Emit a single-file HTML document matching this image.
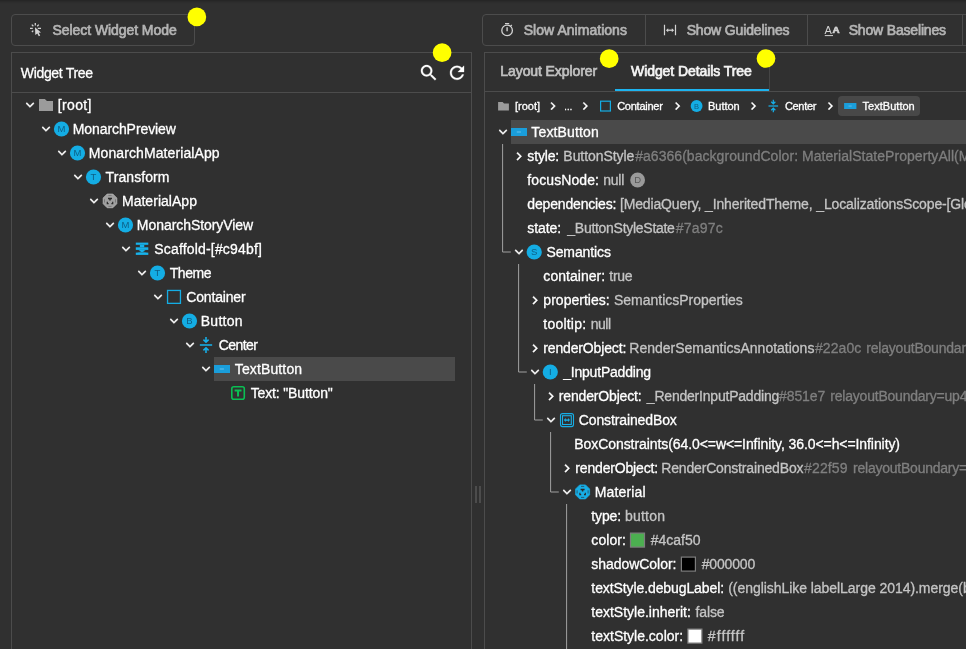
<!DOCTYPE html><html><head><meta charset="utf-8"><title>Flutter Inspector</title><style>
html,body{margin:0;padding:0;}
body{width:966px;height:649px;overflow:hidden;background:#303030;position:relative;font-family:"Liberation Sans",sans-serif;}
.t{position:absolute;white-space:pre;line-height:1;-webkit-text-stroke:0.3px currentColor;}
.bx{position:absolute;box-sizing:border-box;}
svg{position:absolute;left:0;top:0;will-change:transform;}
.tail{letter-spacing:-0.3px;}
.med{-webkit-text-stroke:0.7px currentColor;}

</style></head><body>
<div class="bx" style="left:0;top:0;width:966px;height:4px;background:linear-gradient(#242424,#2c2c2c 50%,#303030);"></div>
<div class="bx" style="left:11px;top:14px;width:184px;height:32px;border:1px solid #4c4c4c;border-radius:4px;"></div>
<div class="bx" style="left:482px;top:14px;width:700px;height:32px;border:1px solid #4c4c4c;border-radius:4px;"></div>
<div class="bx" style="left:645px;top:14px;width:1px;height:32px;background:#4c4c4c;"></div>
<div class="bx" style="left:807px;top:14px;width:1px;height:32px;background:#4c4c4c;"></div>
<div class="bx" style="left:962px;top:14px;width:1px;height:32px;background:#4c4c4c;"></div>
<div class="bx" style="left:11px;top:52px;width:461px;height:700px;border:1px solid #4c4c4c;"></div>
<div class="bx" style="left:11px;top:92px;width:461px;height:1px;background:#4c4c4c;"></div>
<div class="bx" style="left:214px;top:357px;width:241px;height:24px;background:#4a4a4a;"></div>
<div class="bx" style="left:475px;top:486px;width:2px;height:17px;background:#4c4c4c;"></div>
<div class="bx" style="left:479px;top:486px;width:2px;height:17px;background:#4c4c4c;"></div>
<div class="bx" style="left:484px;top:52px;width:700px;height:700px;border:1px solid #4c4c4c;"></div>
<div class="bx" style="left:484px;top:91px;width:482px;height:1px;background:#4c4c4c;"></div>
<div class="bx" style="left:769px;top:53px;width:1px;height:38px;background:#454545;"></div>
<div class="bx" style="left:615px;top:89px;width:154px;height:2px;background:#1db4f0;"></div>
<div class="bx" style="left:838px;top:96px;width:82px;height:20px;background:#484848;border-radius:4px;"></div>
<div class="bx" style="left:511px;top:120px;width:455px;height:24px;background:#4a4a4a;"></div>
<svg width="966" height="649" viewBox="0 0 966 649">
<path transform="translate(21.84,96.74) scale(0.68)" fill="#ffffff" stroke="#ffffff" stroke-width="0.55" stroke-linejoin="miter" d="M16.59 8.59L12 13.17 7.41 8.59 6 10l6 6 6-6z"/>
<path fill="#9b9b9b" d="M39 99 h5.88 l2.04 2.04 h6.08 v9.96 h-14 z"/>
<path transform="translate(37.84,120.74) scale(0.68)" fill="#ffffff" stroke="#ffffff" stroke-width="0.55" stroke-linejoin="miter" d="M16.59 8.59L12 13.17 7.41 8.59 6 10l6 6 6-6z"/>
<circle cx="61.5" cy="129" r="7.6" fill="#14ade4"/>
<text x="61.5" y="132.42" font-size="9.5" text-anchor="middle" fill="#0d5f86" font-family="Liberation Sans, sans-serif">M</text>
<path transform="translate(53.84,144.74) scale(0.68)" fill="#ffffff" stroke="#ffffff" stroke-width="0.55" stroke-linejoin="miter" d="M16.59 8.59L12 13.17 7.41 8.59 6 10l6 6 6-6z"/>
<circle cx="77.5" cy="153" r="7.6" fill="#14ade4"/>
<text x="77.5" y="156.42" font-size="9.5" text-anchor="middle" fill="#0d5f86" font-family="Liberation Sans, sans-serif">M</text>
<path transform="translate(69.84,168.74) scale(0.68)" fill="#ffffff" stroke="#ffffff" stroke-width="0.55" stroke-linejoin="miter" d="M16.59 8.59L12 13.17 7.41 8.59 6 10l6 6 6-6z"/>
<circle cx="93.5" cy="177" r="7.6" fill="#14ade4"/>
<text x="93.5" y="180.42" font-size="9.5" text-anchor="middle" fill="#0d5f86" font-family="Liberation Sans, sans-serif">T</text>
<path transform="translate(85.84,192.74) scale(0.68)" fill="#ffffff" stroke="#ffffff" stroke-width="0.55" stroke-linejoin="miter" d="M16.59 8.59L12 13.17 7.41 8.59 6 10l6 6 6-6z"/>
<polygon points="116.84,203.73 112.83,207.74 107.17,207.74 103.16,203.73 103.16,198.07 107.17,194.06 112.83,194.06 116.84,198.07" fill="#a0a0a0" stroke="#bdbdbd" stroke-width="0.7" stroke-linejoin="round"/>
<path d="M108.4 195.4 H111.6 M108.4 206.4 H111.6 M104.5 199.3 V202.5 M115.5 199.3 V202.5" stroke="#6e6e6e" stroke-width="0.8"/>
<path d="M108 198.5 H112 M110 198.5 V200.5" stroke="#2a2a2a" stroke-width="1.5" fill="none"/>
<path d="M107.3 201.70000000000002 V203.70000000000002 H108.6 M112.7 201.70000000000002 V203.70000000000002 H111.4" stroke="#2a2a2a" stroke-width="1.2" fill="none"/>
<path transform="translate(101.84,216.74) scale(0.68)" fill="#ffffff" stroke="#ffffff" stroke-width="0.55" stroke-linejoin="miter" d="M16.59 8.59L12 13.17 7.41 8.59 6 10l6 6 6-6z"/>
<circle cx="125.5" cy="225" r="7.6" fill="#14ade4"/>
<text x="125.5" y="228.42" font-size="9.5" text-anchor="middle" fill="#0d5f86" font-family="Liberation Sans, sans-serif">M</text>
<path transform="translate(117.84,240.74) scale(0.68)" fill="#ffffff" stroke="#ffffff" stroke-width="0.55" stroke-linejoin="miter" d="M16.59 8.59L12 13.17 7.41 8.59 6 10l6 6 6-6z"/>
<g fill="#17b2ea"><rect x="135.8" y="242.6" width="12.5" height="2.2"/><rect x="135.8" y="247.29999999999998" width="12.5" height="2.6"/><rect x="135.8" y="252.6" width="12.5" height="2.3"/><rect x="139.85000000000002" y="244.79999999999998" width="4.4" height="2.5"/><path d="M138.45000000000002 249.9 h7.2 l-2.6 1.7 l4 1 h-10 l4 -1z"/></g>
<path transform="translate(133.84,264.74) scale(0.68)" fill="#ffffff" stroke="#ffffff" stroke-width="0.55" stroke-linejoin="miter" d="M16.59 8.59L12 13.17 7.41 8.59 6 10l6 6 6-6z"/>
<circle cx="157.5" cy="273" r="7.6" fill="#14ade4"/>
<text x="157.5" y="276.42" font-size="9.5" text-anchor="middle" fill="#0d5f86" font-family="Liberation Sans, sans-serif">T</text>
<path transform="translate(149.84,288.74) scale(0.68)" fill="#ffffff" stroke="#ffffff" stroke-width="0.55" stroke-linejoin="miter" d="M16.59 8.59L12 13.17 7.41 8.59 6 10l6 6 6-6z"/>
<rect x="167.55" y="290.45" width="12.90" height="12.90" fill="none" stroke="#14ade4" stroke-width="1.3"/>
<path transform="translate(165.84,312.74) scale(0.68)" fill="#ffffff" stroke="#ffffff" stroke-width="0.55" stroke-linejoin="miter" d="M16.59 8.59L12 13.17 7.41 8.59 6 10l6 6 6-6z"/>
<circle cx="189.5" cy="321" r="7.6" fill="#14ade4"/>
<text x="189.5" y="324.42" font-size="9.5" text-anchor="middle" fill="#0d5f86" font-family="Liberation Sans, sans-serif">B</text>
<path transform="translate(181.84,336.74) scale(0.68)" fill="#ffffff" stroke="#ffffff" stroke-width="0.55" stroke-linejoin="miter" d="M16.59 8.59L12 13.17 7.41 8.59 6 10l6 6 6-6z"/>
<g stroke="#17b0ea" stroke-width="1.55" fill="none"><path d="M199.85 345 H212.15"/><path d="M206 337.00 V342.40 M203.40 339.60 L206 342.20 L208.60 339.60"/><path d="M206 353.00 V347.60 M203.40 350.40 L206 347.80 L208.60 350.40"/></g>
<path transform="translate(197.84,360.74) scale(0.68)" fill="#ffffff" stroke="#ffffff" stroke-width="0.55" stroke-linejoin="miter" d="M16.59 8.59L12 13.17 7.41 8.59 6 10l6 6 6-6z"/>
<rect x="214" y="365" width="16" height="8" fill="#1a9edb"/>
<rect x="219.76" y="368.52" width="4.16" height="0.96" fill="#6cc3ee"/>
<rect x="231.80" y="386.70" width="12.50" height="12.50" rx="2" fill="none" stroke="#0abf53" stroke-width="1.6"/>
<path fill="#0abf53" d="M234.60 389.50 h6.90 v2 h-2.45 v4.90 h-2 v-4.90 h-2.45 z"/>
<path fill="#9b9b9b" d="M498.1 102 h4.54 l1.43 1.43 h4.84 v6.97 h-10.8 z"/>
<path transform="translate(545.10,98.30) scale(0.65)" fill="#ffffff" stroke="#ffffff" stroke-width="0.55" d="M10 6L8.59 7.41 13.17 12l-4.58 4.59L10 18l6-6z"/>
<path transform="translate(577.40,98.30) scale(0.65)" fill="#ffffff" stroke="#ffffff" stroke-width="0.55" d="M10 6L8.59 7.41 13.17 12l-4.58 4.59L10 18l6-6z"/>
<rect x="600.60" y="101.20" width="9.80" height="9.80" fill="none" stroke="#14ade4" stroke-width="1.2"/>
<path transform="translate(669.70,98.30) scale(0.65)" fill="#ffffff" stroke="#ffffff" stroke-width="0.55" d="M10 6L8.59 7.41 13.17 12l-4.58 4.59L10 18l6-6z"/>
<circle cx="696.6" cy="106" r="5.9" fill="#14ade4"/>
<text x="696.6" y="108.70" font-size="7.5" text-anchor="middle" fill="#0d5f86" font-family="Liberation Sans, sans-serif">B</text>
<path transform="translate(745.60,98.30) scale(0.65)" fill="#ffffff" stroke="#ffffff" stroke-width="0.55" d="M10 6L8.59 7.41 13.17 12l-4.58 4.59L10 18l6-6z"/>
<g stroke="#17b0ea" stroke-width="1.21" fill="none"><path d="M768.50 106 H778.10"/><path d="M773.3 99.76 V103.97 M771.27 101.79 L773.3 103.82 L775.33 101.79"/><path d="M773.3 112.24 V108.03 M771.27 110.21 L773.3 108.18 L775.33 110.21"/></g>
<path transform="translate(822.50,98.30) scale(0.65)" fill="#ffffff" stroke="#ffffff" stroke-width="0.55" d="M10 6L8.59 7.41 13.17 12l-4.58 4.59L10 18l6-6z"/>
<rect x="844.1" y="103" width="12.3" height="6" fill="#1a9edb"/>
<rect x="848.53" y="105.64" width="3.20" height="0.80" fill="#6cc3ee"/>
<path transform="translate(494.84,123.74) scale(0.68)" fill="#ffffff" stroke="#ffffff" stroke-width="0.55" stroke-linejoin="miter" d="M16.59 8.59L12 13.17 7.41 8.59 6 10l6 6 6-6z"/>
<rect x="511" y="128" width="16" height="8" fill="#1a9edb"/>
<rect x="516.76" y="131.52" width="4.16" height="0.96" fill="#6cc3ee"/>
<path transform="translate(510.84,148.14) scale(0.68)" fill="#ffffff" stroke="#ffffff" stroke-width="0.55" d="M10 6L8.59 7.41 13.17 12l-4.58 4.59L10 18l6-6z"/>
<circle cx="637.6" cy="180" r="7.4" fill="#9a9a9a"/>
<text x="637.6" y="183.42" font-size="9.5" text-anchor="middle" fill="#585858" font-family="Liberation Sans, sans-serif">D</text>
<path transform="translate(510.84,243.74) scale(0.68)" fill="#ffffff" stroke="#ffffff" stroke-width="0.55" stroke-linejoin="miter" d="M16.59 8.59L12 13.17 7.41 8.59 6 10l6 6 6-6z"/>
<circle cx="534.2" cy="252" r="7.6" fill="#14ade4"/>
<text x="534.2" y="255.42" font-size="9.5" text-anchor="middle" fill="#0d5f86" font-family="Liberation Sans, sans-serif">S</text>
<path transform="translate(526.84,292.14) scale(0.68)" fill="#ffffff" stroke="#ffffff" stroke-width="0.55" d="M10 6L8.59 7.41 13.17 12l-4.58 4.59L10 18l6-6z"/>
<path transform="translate(526.84,340.14) scale(0.68)" fill="#ffffff" stroke="#ffffff" stroke-width="0.55" d="M10 6L8.59 7.41 13.17 12l-4.58 4.59L10 18l6-6z"/>
<path transform="translate(526.84,363.74) scale(0.68)" fill="#ffffff" stroke="#ffffff" stroke-width="0.55" stroke-linejoin="miter" d="M16.59 8.59L12 13.17 7.41 8.59 6 10l6 6 6-6z"/>
<circle cx="550.3" cy="372" r="7.6" fill="#14ade4"/>
<text x="550.3" y="375.42" font-size="9.5" text-anchor="middle" fill="#0d5f86" font-family="Liberation Sans, sans-serif">I</text>
<path transform="translate(542.84,388.14) scale(0.68)" fill="#ffffff" stroke="#ffffff" stroke-width="0.55" d="M10 6L8.59 7.41 13.17 12l-4.58 4.59L10 18l6-6z"/>
<path transform="translate(542.84,411.74) scale(0.68)" fill="#ffffff" stroke="#ffffff" stroke-width="0.55" stroke-linejoin="miter" d="M16.59 8.59L12 13.17 7.41 8.59 6 10l6 6 6-6z"/>
<rect x="560.5" y="413.6" width="13.0" height="13.0" rx="2" fill="none" stroke="#17aee6" stroke-width="1.1"/>
<rect x="562.5" y="415.7" width="8.8" height="8.8" fill="none" stroke="#17aee6" stroke-width="1.1"/>
<path d="M565.1 420.1 H568.6999999999999" stroke="#17aee6" stroke-width="1.4"/>
<path fill="#17aee6" d="M563.8 420.1 l2 -2 v4z M570.0 420.1 l-2 -2 v4z"/>
<path transform="translate(558.84,460.14) scale(0.68)" fill="#ffffff" stroke="#ffffff" stroke-width="0.55" d="M10 6L8.59 7.41 13.17 12l-4.58 4.59L10 18l6-6z"/>
<path transform="translate(558.84,483.74) scale(0.68)" fill="#ffffff" stroke="#ffffff" stroke-width="0.55" stroke-linejoin="miter" d="M16.59 8.59L12 13.17 7.41 8.59 6 10l6 6 6-6z"/>
<polygon points="589.62,494.81 585.51,498.92 579.69,498.92 575.58,494.81 575.58,488.99 579.69,484.88 585.51,484.88 589.62,488.99" fill="#17aee6" stroke="#17aee6" stroke-width="0.7" stroke-linejoin="round"/>
<path d="M581.0 486.4 H584.2 M581.0 497.4 H584.2 M577.1 490.29999999999995 V493.5 M588.1 490.29999999999995 V493.5" stroke="#274a5a" stroke-width="0.8"/>
<path d="M580.6 489.5 H584.6 M582.6 489.5 V491.5" stroke="#2a2a2a" stroke-width="1.5" fill="none"/>
<path d="M579.9 492.7 V494.7 H581.2 M585.3000000000001 492.7 V494.7 H584.0" stroke="#2a2a2a" stroke-width="1.2" fill="none"/>
<rect x="630.50" y="533.10" width="14.00" height="14.00" fill="#4caf50" stroke="#7d7d7d" stroke-width="1.2"/>
<rect x="681.40" y="557.10" width="14.00" height="14.00" fill="#000000" stroke="#7d7d7d" stroke-width="1.2"/>
<rect x="687.90" y="629.10" width="14.00" height="14.00" fill="#ffffff" stroke="#7d7d7d" stroke-width="1.2"/>
<path d="M502.6 144 V252 H510.8" fill="none" stroke="#a0a0a0" stroke-width="1"/>
<path d="M518.6 264 V372 H526.8" fill="none" stroke="#a0a0a0" stroke-width="1"/>
<path d="M534.6 384 V420 H542.8" fill="none" stroke="#a0a0a0" stroke-width="1"/>
<path d="M550.6 432 V492 H558.8" fill="none" stroke="#a0a0a0" stroke-width="1"/>
<path d="M566.6 504 V660" fill="none" stroke="#a0a0a0" stroke-width="1"/>
<g stroke="#d2d2d2" stroke-width="1.3" fill="none"><path d="M35.3 23 V25.6 M30 28.3 H32.8 M37.8 28.3 H41 M31.8 24.6 L33.4 26.2 M38.8 24.6 L37.2 26.2 M31.9 32 L33.3 30.6"/></g>
<path fill="#d2d2d2" d="M35 27.3 L41 32.4 L38.6 32.8 L40.2 35.6 L38.8 36.3 L37.3 33.5 L35.3 35z"/>
<circle cx="507.1" cy="30.4" r="5.3" fill="none" stroke="#d2d2d2" stroke-width="1.3"/>
<path d="M505 23.6 H509.2" stroke="#d2d2d2" stroke-width="1.2"/>
<path d="M507.1 27.2 V31.2" stroke="#d2d2d2" stroke-width="1.4"/>
<path d="M510.6 26.2 L511.8 25" stroke="#d2d2d2" stroke-width="1.2"/>
<path d="M664.5 24.8 V35.2 M675.5 24.8 V35.2" stroke="#d2d2d2" stroke-width="1.2"/>
<path d="M667.5 30.2 H672.5" stroke="#d2d2d2" stroke-width="1.3"/>
<path fill="#d2d2d2" d="M665.9 30.2 l2.3 -2 v4z M674.1 30.2 l-2.3 -2 v4z"/>
<text x="824.4" y="33.8" font-size="11" fill="#d2d2d2" font-family="Liberation Sans, sans-serif">A</text>
<text x="832.6" y="33.1" font-size="9.8" font-weight="700" stroke="#d2d2d2" stroke-width="0.7" fill="#d2d2d2" font-family="Liberation Sans, sans-serif">A</text>
<path d="M824.8 35.6 H833" stroke="#d2d2d2" stroke-width="1"/>
<path transform="translate(418.3,62.4) scale(0.875)" fill="#ffffff" stroke="#ffffff" stroke-width="0.35" d="M15.5 14h-.79l-.28-.27C15.41 12.59 16 11.11 16 9.5 16 5.91 13.09 3 9.5 3S3 5.91 3 9.5 5.91 16 9.5 16c1.61 0 3.09-.59 4.23-1.57l.27.28v.79l5 4.99L20.49 19l-4.99-5zm-6 0C7.01 14 5 11.99 5 9.5S7.01 5 9.5 5 14 7.01 14 9.5 11.99 14 9.5 14z"/>
<path transform="translate(446.5,62.3) scale(0.875)" fill="#ffffff" stroke="#ffffff" stroke-width="0.35" d="M17.65 6.35C16.2 4.9 14.21 4 12 4c-4.42 0-7.99 3.58-7.99 8s3.57 8 7.99 8c3.73 0 6.84-2.55 7.73-6h-2.08c-.82 2.33-3.04 4-5.65 4-3.31 0-6-2.69-6-6s2.69-6 6-6c1.66 0 3.14.69 4.22 1.78L13 11h7V4l-2.35 2.35z"/>
<circle cx="196.85" cy="16.95" r="9.35" fill="#ffff00"/>
<circle cx="442.1" cy="52.7" r="9.35" fill="#ffff00"/>
<circle cx="609.2" cy="58.7" r="9.35" fill="#ffff00"/>
<circle cx="766" cy="58.5" r="9.35" fill="#ffff00"/>
</svg>
<div id="txt" style="position:absolute;left:0;top:0;width:966px;height:649px;will-change:transform;">
<div class="t" id="t0" style="left:57.75px;top:98.15px;font-size:14px;font-weight:400;color:#ffffff;letter-spacing:0.347px;"><span id="s0">[root]</span></div>
<div class="t" id="t1" style="left:72.75px;top:122.15px;font-size:14px;font-weight:400;color:#ffffff;letter-spacing:-0.085px;"><span id="s1">MonarchPreview</span></div>
<div class="t" id="t2" style="left:88.85px;top:146.15px;font-size:14px;font-weight:400;color:#ffffff;letter-spacing:0.092px;"><span id="s2">MonarchMaterialApp</span></div>
<div class="t" id="t3" style="left:105.55px;top:170.15px;font-size:14px;font-weight:400;color:#ffffff;letter-spacing:0.081px;"><span id="s3">Transform</span></div>
<div class="t" id="t4" style="left:121.95px;top:194.15px;font-size:14px;font-weight:400;color:#ffffff;letter-spacing:0.033px;"><span id="s4">MaterialApp</span></div>
<div class="t" id="t5" style="left:136.85px;top:218.15px;font-size:14px;font-weight:400;color:#ffffff;letter-spacing:-0.058px;"><span id="s5">MonarchStoryView</span></div>
<div class="t" id="t6" style="left:154.25px;top:242.15px;font-size:14px;font-weight:400;color:#ffffff;letter-spacing:0.177px;"><span id="s6">Scaffold-[#c94bf]</span></div>
<div class="t" id="t7" style="left:169.65px;top:266.15px;font-size:14px;font-weight:400;color:#ffffff;letter-spacing:-0.409px;"><span id="s7">Theme</span></div>
<div class="t" id="t8" style="left:186.35px;top:290.15px;font-size:14px;font-weight:400;color:#ffffff;letter-spacing:-0.186px;"><span id="s8">Container</span></div>
<div class="t" id="t9" style="left:200.75px;top:314.15px;font-size:14px;font-weight:400;color:#ffffff;letter-spacing:0.252px;"><span id="s9">Button</span></div>
<div class="t" id="t10" style="left:218.65px;top:338.15px;font-size:14px;font-weight:400;color:#ffffff;letter-spacing:-0.542px;"><span id="s10">Center</span></div>
<div class="t" id="t11" style="left:234.75px;top:362.15px;font-size:14px;font-weight:400;color:#ffffff;letter-spacing:0.132px;"><span id="s11">TextButton</span></div>
<div class="t" id="t12" style="left:250.65px;top:386.15px;font-size:14px;font-weight:400;color:#ffffff;letter-spacing:-0.135px;"><span id="s12">Text: "Button"</span></div>
<div class="t med" id="t13" style="left:52.55px;top:23.15px;font-size:14px;font-weight:400;color:#b4b4b4;letter-spacing:-0.067px;"><span id="s13">Select Widget Mode</span></div>
<div class="t med" id="t14" style="left:523.75px;top:23.15px;font-size:14px;font-weight:400;color:#b4b4b4;letter-spacing:0.033px;"><span id="s14">Slow Animations</span></div>
<div class="t med" id="t15" style="left:686.65px;top:23.15px;font-size:14px;font-weight:400;color:#b4b4b4;letter-spacing:-0.151px;"><span id="s15">Show Guidelines</span></div>
<div class="t med" id="t16" style="left:848.65px;top:23.15px;font-size:14px;font-weight:400;color:#b4b4b4;letter-spacing:-0.166px;"><span id="s16">Show Baselines</span></div>
<div class="t" id="t17" style="left:20.75px;top:65.95px;font-size:14px;font-weight:400;color:#ffffff;letter-spacing:-0.319px;"><span id="s17">Widget Tree</span></div>
<div class="t med" id="t18" style="left:500.35px;top:63.95px;font-size:14px;font-weight:400;color:#c0c0c0;letter-spacing:-0.096px;"><span id="s18">Layout Explorer</span></div>
<div class="t med" id="t19" style="left:631.05px;top:63.95px;font-size:14px;font-weight:400;color:#f4f4f4;letter-spacing:-0.082px;"><span id="s19">Widget Details Tree</span></div>
<div class="t" id="t20" style="left:514.95px;top:100.69px;font-size:11px;font-weight:400;color:#ffffff;letter-spacing:0.028px;"><span id="s20">[root]</span></div>
<div class="t" id="t21" style="left:563.95px;top:102.80px;font-size:8.5px;font-weight:400;color:#ffffff;letter-spacing:0.000px;"><span id="s21">…</span></div>
<div class="t" id="t22" style="left:617.15px;top:100.69px;font-size:11px;font-weight:400;color:#ffffff;letter-spacing:-0.248px;"><span id="s22">Container</span></div>
<div class="t" id="t23" style="left:707.95px;top:100.69px;font-size:11px;font-weight:400;color:#ffffff;letter-spacing:-0.007px;"><span id="s23">Button</span></div>
<div class="t" id="t24" style="left:784.95px;top:100.69px;font-size:11px;font-weight:400;color:#ffffff;letter-spacing:-0.321px;"><span id="s24">Center</span></div>
<div class="t" id="t25" style="left:862.55px;top:100.69px;font-size:11px;font-weight:400;color:#ffffff;letter-spacing:0.021px;"><span id="s25">TextButton</span></div>
<div class="t" id="t26" style="left:531.35px;top:125.15px;font-size:14px;font-weight:400;color:#ffffff;letter-spacing:0.143px;"><span id="s26">TextButton</span></div>
<div class="t" id="t27" style="left:527.35px;top:149.15px;font-size:14px;font-weight:400;color:#ffffff;letter-spacing:-0.167px;"><span id="s27">style:</span></div>
<div class="t" id="t28" style="left:563.35px;top:149.15px;font-size:14px;font-weight:400;color:#c4c4c4;letter-spacing:-0.056px;"><span id="s28">ButtonStyle</span></div>
<div class="t" id="t29" style="left:635.15px;top:149.15px;font-size:14px;font-weight:400;color:#7f7f7f;letter-spacing:0.046px;"><span id="s29">#a6366(backgroundColor: MaterialStatePropertyAll(</span><span id="tl29">MaterialColor(primary value: Color(0xff4caf50)))</span></div>
<div class="t" id="t30" style="left:527.35px;top:173.15px;font-size:14px;font-weight:400;color:#ffffff;letter-spacing:0.091px;"><span id="s30">focusNode:</span></div>
<div class="t" id="t31" style="left:603.15px;top:173.15px;font-size:14px;font-weight:400;color:#c4c4c4;letter-spacing:-0.211px;"><span id="s31">null</span></div>
<div class="t" id="t32" style="left:527.35px;top:197.15px;font-size:14px;font-weight:400;color:#ffffff;letter-spacing:-0.170px;"><span id="s32">dependencies:</span></div>
<div class="t" id="t33" style="left:619.95px;top:197.15px;font-size:14px;font-weight:400;color:#c4c4c4;letter-spacing:-0.139px;"><span id="s33">[MediaQuery, _InheritedTheme, _LocalizationsScope-[Gl</span><span id="tl33">obalKey#1a2b3]]</span></div>
<div class="t" id="t34" style="left:527.35px;top:221.15px;font-size:14px;font-weight:400;color:#ffffff;letter-spacing:-0.080px;"><span id="s34">state:</span></div>
<div class="t" id="t35" style="left:567.35px;top:221.15px;font-size:14px;font-weight:400;color:#c4c4c4;letter-spacing:-0.284px;"><span id="s35">_ButtonStyleState</span></div>
<div class="t" id="t36" style="left:675.65px;top:221.15px;font-size:14px;font-weight:400;color:#7f7f7f;letter-spacing:0.244px;"><span id="s36">#7a97c</span></div>
<div class="t" id="t37" style="left:546.45px;top:245.15px;font-size:14px;font-weight:400;color:#ffffff;letter-spacing:-0.101px;"><span id="s37">Semantics</span></div>
<div class="t" id="t38" style="left:543.35px;top:269.15px;font-size:14px;font-weight:400;color:#ffffff;letter-spacing:0.040px;"><span id="s38">container:</span></div>
<div class="t" id="t39" style="left:609.35px;top:269.15px;font-size:14px;font-weight:400;color:#c4c4c4;letter-spacing:-0.296px;"><span id="s39">true</span></div>
<div class="t" id="t40" style="left:543.35px;top:293.15px;font-size:14px;font-weight:400;color:#ffffff;letter-spacing:0.020px;"><span id="s40">properties:</span></div>
<div class="t" id="t41" style="left:614.05px;top:293.15px;font-size:14px;font-weight:400;color:#c4c4c4;letter-spacing:-0.023px;"><span id="s41">SemanticsProperties</span></div>
<div class="t" id="t42" style="left:543.35px;top:317.15px;font-size:14px;font-weight:400;color:#ffffff;letter-spacing:0.213px;"><span id="s42">tooltip:</span></div>
<div class="t" id="t43" style="left:590.65px;top:317.15px;font-size:14px;font-weight:400;color:#c4c4c4;letter-spacing:-0.444px;"><span id="s43">null</span></div>
<div class="t" id="t44" style="left:543.35px;top:341.15px;font-size:14px;font-weight:400;color:#ffffff;letter-spacing:-0.157px;"><span id="s44">renderObject:</span></div>
<div class="t" id="t45" style="left:629.35px;top:341.15px;font-size:14px;font-weight:400;color:#c4c4c4;letter-spacing:-0.007px;"><span id="s45">RenderSemanticsAnnotations</span></div>
<div class="t" id="t46" style="left:814.95px;top:341.15px;font-size:14px;font-weight:400;color:#7f7f7f;letter-spacing:0.084px;"><span id="s46">#22a0c</span></div>
<div class="t" id="t47" style="left:866.25px;top:341.15px;font-size:14px;font-weight:400;color:#7f7f7f;letter-spacing:-0.209px;"><span id="s47">relayoutBoundar</span><span id="tl47">y=up3</span></div>
<div class="t" id="t48" style="left:563.15px;top:365.15px;font-size:14px;font-weight:400;color:#ffffff;letter-spacing:-0.197px;"><span id="s48">_InputPadding</span></div>
<div class="t" id="t49" style="left:558.85px;top:389.15px;font-size:14px;font-weight:400;color:#ffffff;letter-spacing:-0.165px;"><span id="s49">renderObject:</span></div>
<div class="t" id="t50" style="left:646.85px;top:389.15px;font-size:14px;font-weight:400;color:#c4c4c4;letter-spacing:-0.210px;"><span id="s50">_RenderInputPadding</span></div>
<div class="t" id="t51" style="left:779.05px;top:389.15px;font-size:14px;font-weight:400;color:#7f7f7f;letter-spacing:-0.096px;"><span id="s51">#851e7</span></div>
<div class="t" id="t52" style="left:830.35px;top:389.15px;font-size:14px;font-weight:400;color:#7f7f7f;letter-spacing:-0.219px;"><span id="s52">relayoutBoundary=up</span><span id="tl52">4</span></div>
<div class="t" id="t53" style="left:578.75px;top:413.15px;font-size:14px;font-weight:400;color:#ffffff;letter-spacing:-0.120px;"><span id="s53">ConstrainedBox</span></div>
<div class="t" id="t54" style="left:574.35px;top:437.15px;font-size:14px;font-weight:400;color:#ffffff;letter-spacing:-0.079px;"><span id="s54">BoxConstraints(64.0&lt;=w&lt;=Infinity, 36.0&lt;=h&lt;=Infinity)</span></div>
<div class="t" id="t55" style="left:575.35px;top:461.15px;font-size:14px;font-weight:400;color:#ffffff;letter-spacing:-0.173px;"><span id="s55">renderObject:</span></div>
<div class="t" id="t56" style="left:661.25px;top:461.15px;font-size:14px;font-weight:400;color:#c4c4c4;letter-spacing:-0.173px;"><span id="s56">RenderConstrainedBox</span></div>
<div class="t" id="t57" style="left:804.05px;top:461.15px;font-size:14px;font-weight:400;color:#7f7f7f;letter-spacing:0.143px;"><span id="s57">#22f59</span></div>
<div class="t" id="t58" style="left:853.05px;top:461.15px;font-size:14px;font-weight:400;color:#7f7f7f;letter-spacing:-0.232px;"><span id="s58">relayoutBoundary</span><span id="tl58">=up5</span></div>
<div class="t" id="t59" style="left:594.65px;top:485.15px;font-size:14px;font-weight:400;color:#ffffff;letter-spacing:0.167px;"><span id="s59">Material</span></div>
<div class="t" id="t60" style="left:591.35px;top:509.15px;font-size:14px;font-weight:400;color:#ffffff;letter-spacing:-0.153px;"><span id="s60">type:</span></div>
<div class="t" id="t61" style="left:624.95px;top:509.15px;font-size:14px;font-weight:400;color:#c4c4c4;letter-spacing:0.222px;"><span id="s61">button</span></div>
<div class="t" id="t62" style="left:591.35px;top:533.15px;font-size:14px;font-weight:400;color:#ffffff;letter-spacing:0.081px;"><span id="s62">color:</span></div>
<div class="t" id="t63" style="left:650.75px;top:533.15px;font-size:14px;font-weight:400;color:#c4c4c4;letter-spacing:0.003px;"><span id="s63">#4caf50</span></div>
<div class="t" id="t64" style="left:591.35px;top:557.15px;font-size:14px;font-weight:400;color:#ffffff;letter-spacing:-0.051px;"><span id="s64">shadowColor:</span></div>
<div class="t" id="t65" style="left:701.65px;top:557.15px;font-size:14px;font-weight:400;color:#c4c4c4;letter-spacing:-0.144px;"><span id="s65">#000000</span></div>
<div class="t" id="t66" style="left:591.35px;top:581.15px;font-size:14px;font-weight:400;color:#ffffff;letter-spacing:-0.096px;"><span id="s66">textStyle.debugLabel:</span></div>
<div class="t" id="t67" style="left:728.25px;top:581.15px;font-size:14px;font-weight:400;color:#c4c4c4;letter-spacing:-0.052px;"><span id="s67">((englishLike labelLarge 2014).merge(</span><span id="tl67">blackMountainView labelLarge)).copyWith</span></div>
<div class="t" id="t68" style="left:591.35px;top:605.15px;font-size:14px;font-weight:400;color:#ffffff;letter-spacing:-0.009px;"><span id="s68">textStyle.inherit:</span></div>
<div class="t" id="t69" style="left:695.45px;top:605.15px;font-size:14px;font-weight:400;color:#c4c4c4;letter-spacing:-0.109px;"><span id="s69">false</span></div>
<div class="t" id="t70" style="left:591.35px;top:629.15px;font-size:14px;font-weight:400;color:#ffffff;letter-spacing:-0.005px;"><span id="s70">textStyle.color:</span></div>
<div class="t" id="t71" style="left:707.85px;top:629.15px;font-size:14px;font-weight:400;color:#c4c4c4;letter-spacing:1.080px;"><span id="s71">#ffffff</span></div>
</div>
</body></html>
